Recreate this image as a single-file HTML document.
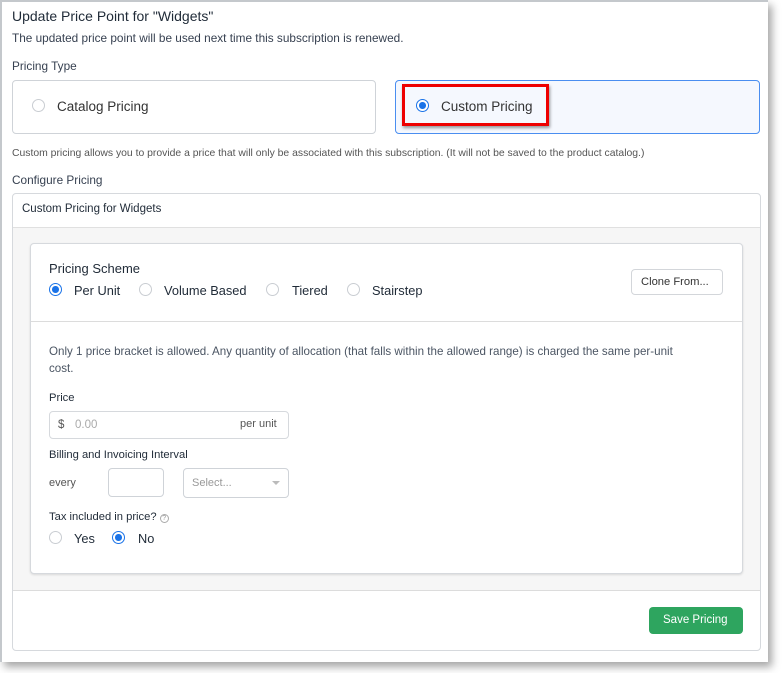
<!DOCTYPE html>
<html><head><style>
*{box-sizing:border-box;margin:0;padding:0}
body{width:782px;height:673px;background:#fff;font-family:"Liberation Sans",sans-serif;color:#1f2a37;position:relative;overflow:hidden}
.a{position:absolute}
.frame{left:0;top:0;width:768px;height:662px;border:2px solid #c4c8cc;border-right:none;border-bottom:none;background:#fff;box-shadow:4px 5px 8px rgba(0,0,0,.35)}
.t{position:absolute;white-space:nowrap}
.rad{position:absolute;width:13px;height:13px;border-radius:50%;border:1px solid #c9cdd2;background:#fff}
.rad.on{border:1.5px solid #1a73e8}
.rad.on::after{content:"";position:absolute;left:2px;top:2px;width:6.5px;height:6.5px;border-radius:50%;background:#1a73e8}
</style></head><body>
<div class="a frame"></div>
<div class="t" style="left:12px;top:8px;font-size:14px">Update Price Point for "Widgets"</div>
<div class="t" style="left:12px;top:31px;font-size:11.8px;color:#374151">The updated price point will be used next time this subscription is renewed.</div>
<div class="t" style="left:12px;top:59px;font-size:11.8px;color:#374151">Pricing Type</div>
<div class="a" style="left:12px;top:80px;width:364px;height:54px;border:1px solid #cfd3d8;border-radius:4px"></div>
<div class="rad" style="left:32px;top:99px"></div>
<div class="t" style="left:57px;top:99px;font-size:13.5px;color:#333">Catalog Pricing</div>
<div class="a" style="left:395px;top:80px;width:365px;height:54px;border:1px solid #4a8ef0;border-radius:4px;background:#f5f8fe"></div>
<div class="a" style="left:402px;top:84px;width:147px;height:42px;border:3px solid #e00;box-shadow:1px 2px 3px rgba(0,0,0,.4)"></div>
<div class="rad on" style="left:416px;top:99px"></div>
<div class="t" style="left:441px;top:99px;font-size:13.5px;color:#333">Custom Pricing</div>
<div class="t" style="left:12px;top:148px;font-size:10.4px;color:#555">Custom pricing allows you to provide a price that will only be associated with this subscription. (It will not be saved to the product catalog.)</div>
<div class="t" style="left:12px;top:173px;font-size:11.8px;color:#374151">Configure Pricing</div>
<div class="a" style="left:12px;top:193px;width:749px;height:458px;border:1px solid #d6d9dd;border-radius:4px;overflow:hidden">
 <div class="a" style="left:0;top:33px;width:100%;height:364px;background:#f6f6f6;border-top:1px solid #e0e0e0;border-bottom:1px solid #dcdcdc"></div>
</div>
<div class="t" style="left:22px;top:203px;font-size:11.5px">Custom Pricing for Widgets</div>
<div class="a" style="left:30px;top:243px;width:713px;height:331px;background:#fff;border:1px solid #d6d9dd;border-radius:4px;box-shadow:0 1px 2px rgba(0,0,0,.12)">
 <div class="a" style="left:0;top:77px;width:100%;border-top:1px solid #dcdcdc"></div>
</div>
<div class="t" style="left:49px;top:261px;font-size:13px">Pricing Scheme</div>
<div class="rad on" style="left:49px;top:283px"></div><div class="t" style="left:74px;top:283px;font-size:12.8px">Per Unit</div>
<div class="rad" style="left:139px;top:283px"></div><div class="t" style="left:164px;top:283px;font-size:12.8px">Volume Based</div>
<div class="rad" style="left:266px;top:283px"></div><div class="t" style="left:292px;top:283px;font-size:12.8px">Tiered</div>
<div class="rad" style="left:347px;top:283px"></div><div class="t" style="left:372px;top:283px;font-size:12.8px">Stairstep</div>
<div class="a" style="left:631px;top:269px;width:92px;height:26px;border:1px solid #d3d6da;border-radius:4px"></div>
<div class="t" style="left:641px;top:276px;font-size:11.2px;color:#333">Clone From...</div>
<div class="t" style="left:49px;top:343px;font-size:11.6px;line-height:17px;color:#4b5563">Only 1 price bracket is allowed. Any quantity of allocation (that falls within the allowed range) is charged the same per-unit<br>cost.</div>
<div class="t" style="left:49px;top:392px;font-size:11.2px">Price</div>
<div class="a" style="left:49px;top:411px;width:240px;height:28px;border:1px solid #d6d9dd;border-radius:4px"></div>
<div class="t" style="left:58px;top:419px;font-size:11.5px;color:#555">$</div>
<div class="t" style="left:75px;top:419px;font-size:11.5px;color:#aaa">0.00</div>
<div class="t" style="left:240px;top:418px;font-size:11px;color:#555">per unit</div>
<div class="t" style="left:49px;top:449px;font-size:11.2px">Billing and Invoicing Interval</div>
<div class="t" style="left:49px;top:477px;font-size:11px;color:#555">every</div>
<div class="a" style="left:108px;top:468px;width:56px;height:29px;border:1px solid #cfd3d8;border-radius:4px"></div>
<div class="a" style="left:183px;top:468px;width:106px;height:30px;border:1px solid #cfd3d8;border-radius:4px"></div>
<div class="t" style="left:192px;top:477px;font-size:11px;color:#999">Select...</div>
<div class="a" style="left:272px;top:481px;width:0;height:0;border-left:4px solid transparent;border-right:4px solid transparent;border-top:4px solid #bbb"></div>
<div class="t" style="left:49px;top:511px;font-size:11.2px">Tax included in price? <span style="color:#999;border:1px solid #aaa;border-radius:50%;display:inline-block;width:9px;height:9px;line-height:8px;text-align:center;font-size:7px">?</span></div>
<div class="rad" style="left:49px;top:531px"></div><div class="t" style="left:74px;top:531px;font-size:12.8px">Yes</div>
<div class="rad on" style="left:112px;top:531px"></div><div class="t" style="left:138px;top:531px;font-size:12.8px">No</div>
<div class="a" style="left:649px;top:607px;width:94px;height:27px;background:#2ea55f;border-radius:4px"></div>
<div class="t" style="left:663px;top:614px;font-size:11.5px;color:#fff">Save Pricing</div>
</body></html>
